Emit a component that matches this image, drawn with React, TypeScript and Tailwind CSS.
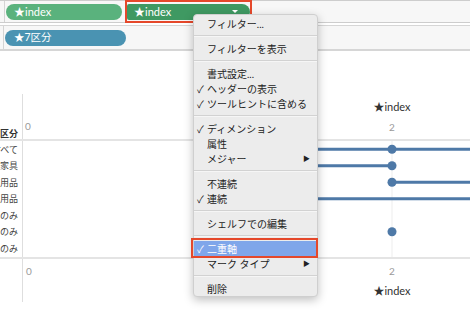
import React from "react";

type MenuEntry =
  | { sep: true }
  | { sep?: false; label: string; check?: boolean; arrow?: boolean; active?: boolean };

const menu: MenuEntry[] = [
  { label: "フィルター..." },
  { sep: true },
  { label: "フィルターを表示" },
  { sep: true },
  { label: "書式設定..." },
  { label: "ヘッダーの表示", check: true },
  { label: "ツールヒントに含める", check: true },
  { sep: true },
  { label: "ディメンション", check: true },
  { label: "属性" },
  { label: "メジャー", arrow: true },
  { sep: true },
  { label: "不連続" },
  { label: "連続", check: true },
  { sep: true },
  { label: "シェルフでの編集" },
  { sep: true },
  { label: "二重軸", check: true, active: true },
  { label: "マーク タイプ", arrow: true },
  { sep: true },
  { label: "削除" },
];

const rows = ["すべて", "家具", "事務用品", "家電用品", "家具のみ", "事務用品のみ", "家電のみ"];

// plot x of value 2, relative to axis line
const X2 = 369;
const ROW_H = 16.5;

function ContextMenu() {
  return (
    <div className="absolute left-[193px] top-[14px] w-[125px] h-[283px] bg-[#ececec] rounded-[4px] border border-[#cfcfcf] shadow-[0_3px_10px_rgba(0,0,0,0.25)] pt-[1px] text-[10px] text-[#222]">
      {menu.map((m, i) =>
        m.sep ? (
          <div key={i} className="h-[10px] flex flex-col justify-center">
            <div className="h-px bg-[#d2d2d2]" />
            <div className="h-px bg-[#f6f6f6]" />
          </div>
        ) : (
          <div
            key={i}
            className={
              "relative h-[15px] flex items-center pl-[13px] " +
              (m.active ? "bg-[#7fa6ea] text-white" : "")
            }
          >
            {m.check && <span className="absolute left-[3px] text-[10px] leading-none">✓</span>}
            <span className="leading-none">{m.label}</span>
            {m.arrow && <span className="absolute right-[7px] text-[7px] leading-none">▶</span>}
            {m.active && (
              <div className="absolute -left-[3px] -right-[1px] -top-[3px] -bottom-[2px] border-2 border-[#e5482b]" />
            )}
          </div>
        )
      )}
    </div>
  );
}

function Marks() {
  const y = (i: number) => ROW_H * i + ROW_H / 2;
  const c = "#4e79a7";
  return (
    <svg className="absolute inset-0" width="447" height="116">
      <line x1={X2} x2={X2} y1="0" y2="116" stroke="#ededed" strokeWidth="1" />
      <line x1="190" x2="447" y1={y(0)} y2={y(0)} stroke={c} strokeWidth="3" />
      <line x1="190" x2={X2} y1={y(1)} y2={y(1)} stroke={c} strokeWidth="3" />
      <line x1={X2} x2="447" y1={y(2)} y2={y(2)} stroke={c} strokeWidth="3" />
      <line x1="190" x2="447" y1={y(3)} y2={y(3)} stroke={c} strokeWidth="3" />
      {[0, 1, 2, 5].map((i) => (
        <circle key={i} cx={X2} cy={y(i)} r="4.5" fill={c} />
      ))}
    </svg>
  );
}

export default function App() {
  return (
    <div className="relative w-[470px] h-[313px] overflow-hidden bg-white font-['Lato','Noto_Sans_CJK_JP',sans-serif]">
      {/* shelves */}
      <div className="flex h-[23px] bg-[#f7f7f7] border-t border-b border-[#cdcdcd]">
        <div className="w-[5px] border-r border-[#d4d4d4]" />
        <div className="flex items-center gap-[5px] pl-[1px]">
          <div className="w-[116px] h-[16px] rounded-full bg-[#5ab27d] text-white text-[11px] leading-none flex items-center pl-[8px]">
            ★index
          </div>
          <div className="relative w-[123px] h-[16px] rounded-l-[2px] rounded-r-[8px] bg-[#3f9962] text-white text-[11px] leading-none flex items-center pl-[7px]">
            ★index
            <span className="absolute right-[12px] top-[6px] w-0 h-0 border-l-[3px] border-r-[3px] border-t-[3px] border-l-transparent border-r-transparent border-t-white" />
            <div className="absolute -left-[2px] -right-[2px] -top-[4px] -bottom-[3px] border-2 border-[#e5482b]" />
          </div>
        </div>
      </div>
      <div className="mt-[2px] flex h-[26px] bg-[#f7f7f7] border-t border-b-2 border-[#d6d6d6]">
        <div className="w-[4px] border-r border-[#d4d4d4]" />
        <div className="flex items-center pl-[1px]">
          <div className="w-[121px] h-[16px] rounded-full bg-[#4a93b2] text-white text-[10.5px] leading-none flex items-center pl-[9px]">
            ★7区分
          </div>
        </div>
      </div>

      {/* chart */}
      <div className="h-[43px]" />
      <div className="grid grid-cols-[23px_1fr]">
        {/* header */}
        <div className="h-[45px] border-r border-[#dedede] flex items-end justify-end pr-[4px] pb-[1px]">
          <span className="text-[9px] font-bold text-[#333] leading-none whitespace-nowrap">区分</span>
        </div>
        <div className="relative h-[45px]">
          <span className="absolute left-[2px] top-[27px] text-[10px] text-[#9a9a9a] leading-none">0</span>
          <span className="absolute top-[7px] left-[369px] -translate-x-1/2 text-[11px] text-[#333] leading-none whitespace-nowrap">
            ★index
          </span>
          <span className="absolute top-[28px] left-[369px] -translate-x-1/2 text-[10px] text-[#9a9a9a] leading-none">2</span>
        </div>

        {/* body */}
        <div className="col-span-2 grid grid-cols-[23px_1fr] border-t-2 border-b-2 border-[#e4e4e4]">
          <div className="border-r border-[#dedede]">
            {rows.map((r) => (
              <div key={r} className="h-[16.5px] flex items-center justify-end overflow-hidden pr-[4px]">
                <span className="text-[9px] text-[#444] leading-none whitespace-nowrap">{r}</span>
              </div>
            ))}
          </div>
          <div className="relative h-[115.5px]">
            <Marks />
          </div>
        </div>

        {/* footer */}
        <div className="h-[43px] border-r border-[#dedede]" />
        <div className="relative h-[43px]">
          <span className="absolute left-[3px] top-[7px] text-[10px] text-[#9a9a9a] leading-none">0</span>
          <span className="absolute top-[7px] left-[369px] -translate-x-1/2 text-[10px] text-[#9a9a9a] leading-none">2</span>
          <span className="absolute top-[26px] left-[369px] -translate-x-1/2 text-[11px] text-[#333] leading-none whitespace-nowrap">
            ★index
          </span>
        </div>
      </div>

      <ContextMenu />
    </div>
  );
}
